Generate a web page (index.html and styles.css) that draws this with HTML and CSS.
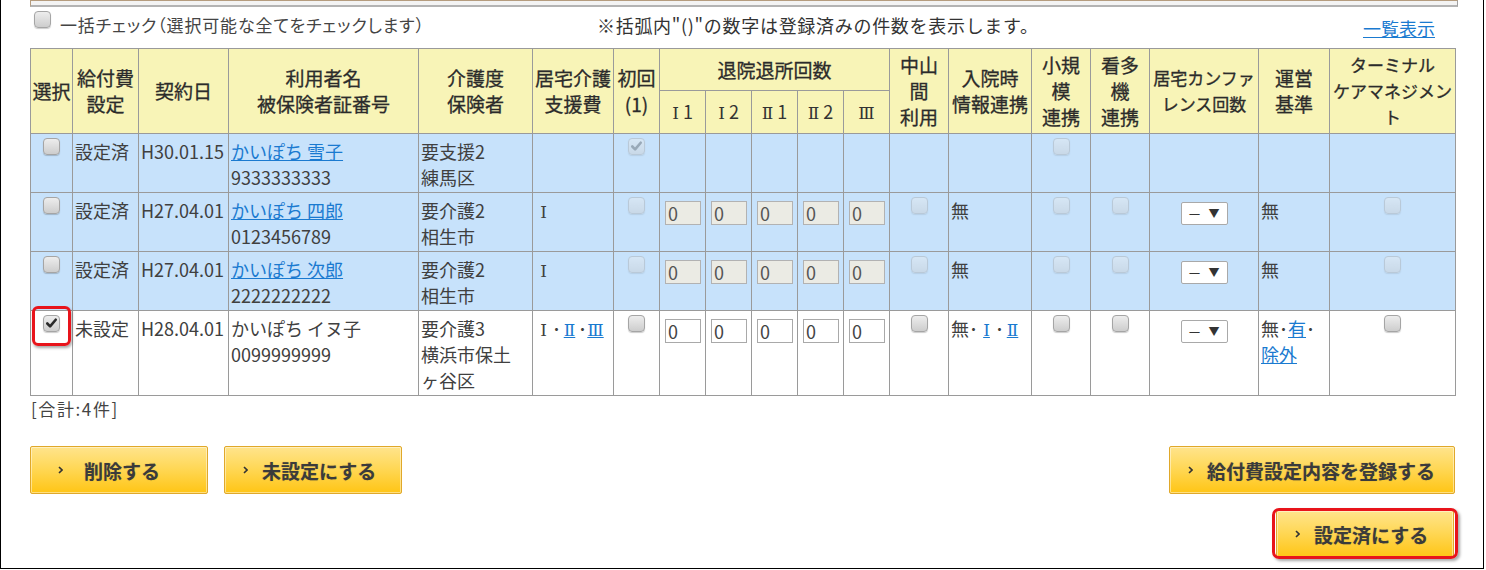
FILE: index.html
```html
<!DOCTYPE html>
<html lang="ja">
<head>
<meta charset="utf-8">
<title>給付費設定</title>
<link rel="stylesheet" href="styles.css">
</head>
<body>
<div class="frame">
  <div class="topbar"></div>
  <div class="toolbar">
    <label class="bulk"><span class="cb"></span><span class="bulk-text">一括チェック（選択可能な全てをチェックします）</span></label>
    <p class="note">※括弧内"()"の数字は登録済みの件数を表示します。</p>
    <a class="list-link" href="#">一覧表示</a>
  </div>
  <table class="grid">
    <colgroup>
      <col style="width:42px"><col style="width:66px"><col style="width:90px"><col style="width:190px">
      <col style="width:114px"><col style="width:81px"><col style="width:46px">
      <col style="width:46px"><col style="width:46px"><col style="width:46px"><col style="width:46px"><col style="width:46px">
      <col style="width:59px"><col style="width:83px"><col style="width:59px"><col style="width:59px">
      <col style="width:109px"><col style="width:71px"><col style="width:126px">
    </colgroup>
    <thead>
      <tr class="h1">
        <th rowspan="2">選択</th>
        <th rowspan="2">給付費<br>設定</th>
        <th rowspan="2">契約日</th>
        <th rowspan="2">利用者名<br>被保険者証番号</th>
        <th rowspan="2">介護度<br>保険者</th>
        <th rowspan="2">居宅介護<br>支援費</th>
        <th rowspan="2">初回<br>(1)</th>
        <th colspan="5">退院退所回数</th>
        <th rowspan="2">中山<br>間<br>利用</th>
        <th rowspan="2">入院時<br>情報連携</th>
        <th rowspan="2">小規<br>模<br>連携</th>
        <th rowspan="2">看多<br>機<br>連携</th>
        <th rowspan="2" class="kana">居宅カンファ<br>レンス回数</th>
        <th rowspan="2">運営<br>基準</th>
        <th rowspan="2" class="kana">ターミナル<br>ケアマネジメン<br>ト</th>
      </tr>
      <tr class="h2">
        <th class="sub"><span class="rn">Ⅰ</span> 1</th><th class="sub"><span class="rn">Ⅰ</span> 2</th><th class="sub"><span class="rn">Ⅱ</span> 1</th><th class="sub"><span class="rn">Ⅱ</span> 2</th><th class="sub"><span class="rn">Ⅲ</span></th>
      </tr>
    </thead>
    <tbody>
      <tr class="blue">
        <td class="c"><span class="cb"></span></td>
        <td>設定済</td>
        <td>H30.01.15</td>
        <td><a href="#">かいぽち 雪子</a><br>9333333333</td>
        <td>要支援2<br>練馬区</td>
        <td></td>
        <td class="c"><span class="cb dis on"><svg viewBox="0 0 16 16"><path d="M3.5 8 L6.5 11 L12.5 4"/></svg></span></td>
        <td></td><td></td><td></td><td></td><td></td>
        <td></td>
        <td></td>
        <td class="c"><span class="cb dis"></span></td>
        <td></td>
        <td></td>
        <td></td>
        <td></td>
      </tr>
      <tr class="blue">
        <td class="c"><span class="cb"></span></td>
        <td>設定済</td>
        <td>H27.04.01</td>
        <td><a href="#">かいぽち 四郎</a><br>0123456789</td>
        <td>要介護2<br>相生市</td>
        <td><span class="rn">Ⅰ</span></td>
        <td class="c"><span class="cb dis"></span></td>
        <td><input class="num" value="0" disabled></td>
        <td><input class="num" value="0" disabled></td>
        <td><input class="num" value="0" disabled></td>
        <td><input class="num" value="0" disabled></td>
        <td><input class="num" value="0" disabled></td>
        <td class="c"><span class="cb dis"></span></td>
        <td>無</td>
        <td class="c"><span class="cb dis"></span></td>
        <td class="c"><span class="cb dis"></span></td>
        <td class="c"><span class="sel"><span class="dash">－</span><span class="tri">▼</span></span></td>
        <td>無</td>
        <td class="c"><span class="cb dis"></span></td>
      </tr>
      <tr class="blue">
        <td class="c"><span class="cb"></span></td>
        <td>設定済</td>
        <td>H27.04.01</td>
        <td><a href="#">かいぽち 次郎</a><br>2222222222</td>
        <td>要介護2<br>相生市</td>
        <td><span class="rn">Ⅰ</span></td>
        <td class="c"><span class="cb dis"></span></td>
        <td><input class="num" value="0" disabled></td>
        <td><input class="num" value="0" disabled></td>
        <td><input class="num" value="0" disabled></td>
        <td><input class="num" value="0" disabled></td>
        <td><input class="num" value="0" disabled></td>
        <td class="c"><span class="cb dis"></span></td>
        <td>無</td>
        <td class="c"><span class="cb dis"></span></td>
        <td class="c"><span class="cb dis"></span></td>
        <td class="c"><span class="sel"><span class="dash">－</span><span class="tri">▼</span></span></td>
        <td>無</td>
        <td class="c"><span class="cb dis"></span></td>
      </tr>
      <tr class="tall">
        <td class="c mark"><span class="cb on"><svg viewBox="0 0 16 16"><path d="M3.5 8 L6.5 11 L12.5 4"/></svg></span><span class="hl-cb"></span></td>
        <td>未設定</td>
        <td>H28.04.01</td>
        <td>かいぽち イヌ子<br>0099999999</td>
        <td>要介護3<br>横浜市保土<br>ヶ谷区</td>
        <td><span class="rn">Ⅰ</span>･<a href="#" class="rn">Ⅱ</a>･<a href="#" class="rn">Ⅲ</a></td>
        <td class="c"><span class="cb"></span></td>
        <td><input class="num" value="0"></td>
        <td><input class="num" value="0"></td>
        <td><input class="num" value="0"></td>
        <td><input class="num" value="0"></td>
        <td><input class="num" value="0"></td>
        <td class="c"><span class="cb"></span></td>
        <td>無･<a href="#" class="rn">Ⅰ</a>･<a href="#" class="rn">Ⅱ</a></td>
        <td class="c"><span class="cb"></span></td>
        <td class="c"><span class="cb"></span></td>
        <td class="c"><span class="sel"><span class="dash">－</span><span class="tri">▼</span></span></td>
        <td>無･<a href="#">有</a>･<br><a href="#">除外</a></td>
        <td class="c"><span class="cb"></span></td>
      </tr>
    </tbody>
  </table>
  <p class="total">[合計:4件]</p>
  <div class="actions">
    <div class="btn-row">
      <div class="btn-group">
        <button class="btn btn-del" type="button"><svg class="arr" viewBox="0 0 5 8"><path d="M1 1 L4 4 L1 7"/></svg>削除する</button>
        <button class="btn" type="button"><svg class="arr" viewBox="0 0 5 8"><path d="M1 1 L4 4 L1 7"/></svg>未設定にする</button>
      </div>
      <button class="btn btn-wide" type="button"><svg class="arr" viewBox="0 0 5 8"><path d="M1 1 L4 4 L1 7"/></svg>給付費設定内容を登録する</button>
    </div>
    <div class="btn-row end">
      <span class="hl-wrap">
        <button class="btn" type="button"><svg class="arr" viewBox="0 0 5 8"><path d="M1 1 L4 4 L1 7"/></svg>設定済にする</button>
        <span class="hl-btn"></span>
      </span>
    </div>
  </div>
</div>
</body>
</html>
```

FILE: styles.css
```css
* { box-sizing: border-box; }
html, body { margin: 0; padding: 0; background: #fff; }
body {
  font-family: "Noto Sans CJK JP", "Noto Sans", sans-serif;
  color: #333;
}
.frame {
  width: 1484px;
  height: 569px;
  border: 1px solid #000;
  border-top: none;
  padding-left: 29px;
  position: relative;
  overflow: hidden;
}
.topbar {
  width: 1428px;
  height: 7px;
  background: #f3f3f3;
  border-top: 1px solid #b59c7e;
  border-left: 1px solid #b59c7e;
  border-right: 1px solid #a0a0a0;
  border-bottom: 2px solid #b3b3b3;
}
.toolbar {
  width: 1425px;
  height: 41px;
  display: grid;
  grid-template-columns: 567px 1fr auto;
  align-items: start;
  padding-right: 20px;
}
.bulk {
  display: flex;
  align-items: flex-start;
  gap: 9px;
  padding-left: 4px;
}
.bulk .cb { margin-top: 4px; }
.bulk-text {
  font-size: 17px;
  line-height: 26px;
  margin-top: 5px;
  color: #444;
  font-feature-settings: "palt";
  letter-spacing: 0.85px;
}
.note {
  margin: 5px 0 0;
  font-size: 18px;
  line-height: 26px;
  color: #333;
  letter-spacing: 0.7px;
}
.list-link {
  margin-top: 8px;
  font-size: 18px;
  line-height: 26px;
  color: #1a7ad0;
}

/* checkbox */
.cb {
  display: inline-block;
  width: 17px;
  height: 17px;
  border: 1px solid #a5a5a5;
  border-radius: 4px;
  background: linear-gradient(#ededed, #cdcdcd);
  box-shadow: 0 1px 1px rgba(0,0,0,.2);
  vertical-align: top;
  position: relative;
}
.cb svg {
  position: absolute;
  left: 0; top: 0;
  width: 15px; height: 15px;
}
.cb svg path {
  fill: none;
  stroke: #2a2a2a;
  stroke-width: 2.8;
  stroke-linecap: round;
  stroke-linejoin: round;
}
.cb.dis { opacity: .4; }
.cb.dis svg path { stroke: #555; }

/* roman numerals (serif style) */
.rn {
  font-family: "DejaVu Serif", "Liberation Serif", "Noto Sans CJK JP", serif;
  font-weight: 400;
}
td .rn, td a.rn {
  display: inline-block;
  width: 17px;
  text-align: center;
  font-size: 17px;
}

/* table */
.grid {
  width: 1425px;
  table-layout: fixed;
  border-collapse: collapse;
}
.grid th, .grid td {
  border: 1px solid #9a9a9a;
}
.grid th {
  background: #f8f4b7;
  font-size: 19px;
  line-height: 26px;
  font-weight: 400;
  color: #2b2b2b;
  text-align: center;
  vertical-align: middle;
  padding: 0;
  white-space: nowrap;
  -webkit-text-stroke: 0.3px #2b2b2b;
}
.grid th.kana { font-size: 17px; }
.grid th.sub { font-size: 18px; -webkit-text-stroke: 0; color: #333; }
.grid th .rn { font-size: 17px; -webkit-text-stroke: 0; }
.grid tr.h1 { height: 42px; }
.grid tr.h2 { height: 43px; }
.grid td {
  font-size: 18px;
  line-height: 26px;
  vertical-align: top;
  padding: 4px 2px 2px;
  color: #404040;
  background: #fff;
}
.grid tbody tr { height: 58px; }
.grid tbody tr.tall { height: 84px; }
.grid tr.blue td { background: #c7e2fb; }
.grid td.c { text-align: center; }
.grid td.c .cb { display: block; margin: 0 auto; }
.grid td.mark { position: relative; }
.grid a { color: #1a7ad0; white-space: nowrap; }

.hl-cb {
  position: absolute;
  left: 1px;
  top: -5px;
  width: 39px;
  height: 40px;
  border: 3px solid #e8141b;
  border-radius: 6px;
  box-shadow: 1px 2px 3px rgba(0,0,0,.35);
}

.num {
  display: block;
  width: 36px;
  height: 24px;
  margin: 4px 0 0 3px;
  padding: 0 2px;
  border: 1px solid #a9a9a9;
  border-radius: 0;
  font-family: "Noto Sans CJK JP", sans-serif;
  font-size: 18px;
  line-height: 22px;
  color: #444;
  background: #fff;
}
.num:disabled {
  background: #ebebe4;
  border-color: #b2b2b2;
  color: #555;
}

.sel {
  display: flex;
  align-items: center;
  justify-content: space-between;
  width: 47px;
  height: 23px;
  margin: 5px auto 0;
  padding: 0 7px 0 6px;
  border: 1px solid #a9a9a9;
  border-radius: 2px;
  background: #fff;
  line-height: 21px;
}
.sel .dash { font-size: 14px; color: #333; }
.sel .tri { font-size: 11px; color: #333; }

.total {
  margin: 0;
  font-size: 17px;
  line-height: 26px;
  color: #444;
  padding-left: 1px;
  letter-spacing: 1.6px;
}

.actions {
  width: 1425px;
  margin-top: 24px;
}
.btn-row {
  display: flex;
  justify-content: space-between;
}
.btn-row.end {
  justify-content: flex-end;
  margin-top: 16px;
}
.btn-group {
  display: flex;
  gap: 16px;
}
.btn {
  display: flex;
  align-items: center;
  gap: 14px;
  width: 178px;
  height: 48px;
  padding: 0 0 0 18px;
  border: 1px solid #e0a82a;
  border-radius: 2px;
  background: linear-gradient(#ffe48c 0%, #ffd858 45%, #ffc515 100%);
  box-shadow: inset 0 0 0 1px rgba(255,255,255,.45);
  font-family: "Noto Sans CJK JP", sans-serif;
  font-size: 19px;
  font-weight: 700;
  color: #3b3b3b;
  text-shadow: 0 0 1px rgba(50,50,50,.35);
  cursor: pointer;
}
.btn-del { padding-left: 27px; gap: 21px; }
.btn-wide { width: 286px; }
.arr { width: 5px; height: 8px; flex: none; }
.arr path { fill: none; stroke: #333; stroke-width: 1.6; }

.hl-wrap { position: relative; display: inline-block; }
.hl-wrap .btn { margin-right: 1px; }
.hl-btn {
  position: absolute;
  left: -4px;
  right: -3px;
  top: -2px;
  bottom: -1px;
  border: 3px solid #e8141b;
  border-radius: 7px;
  box-shadow: 2px 2px 3px rgba(0,0,0,.35);
}
```
